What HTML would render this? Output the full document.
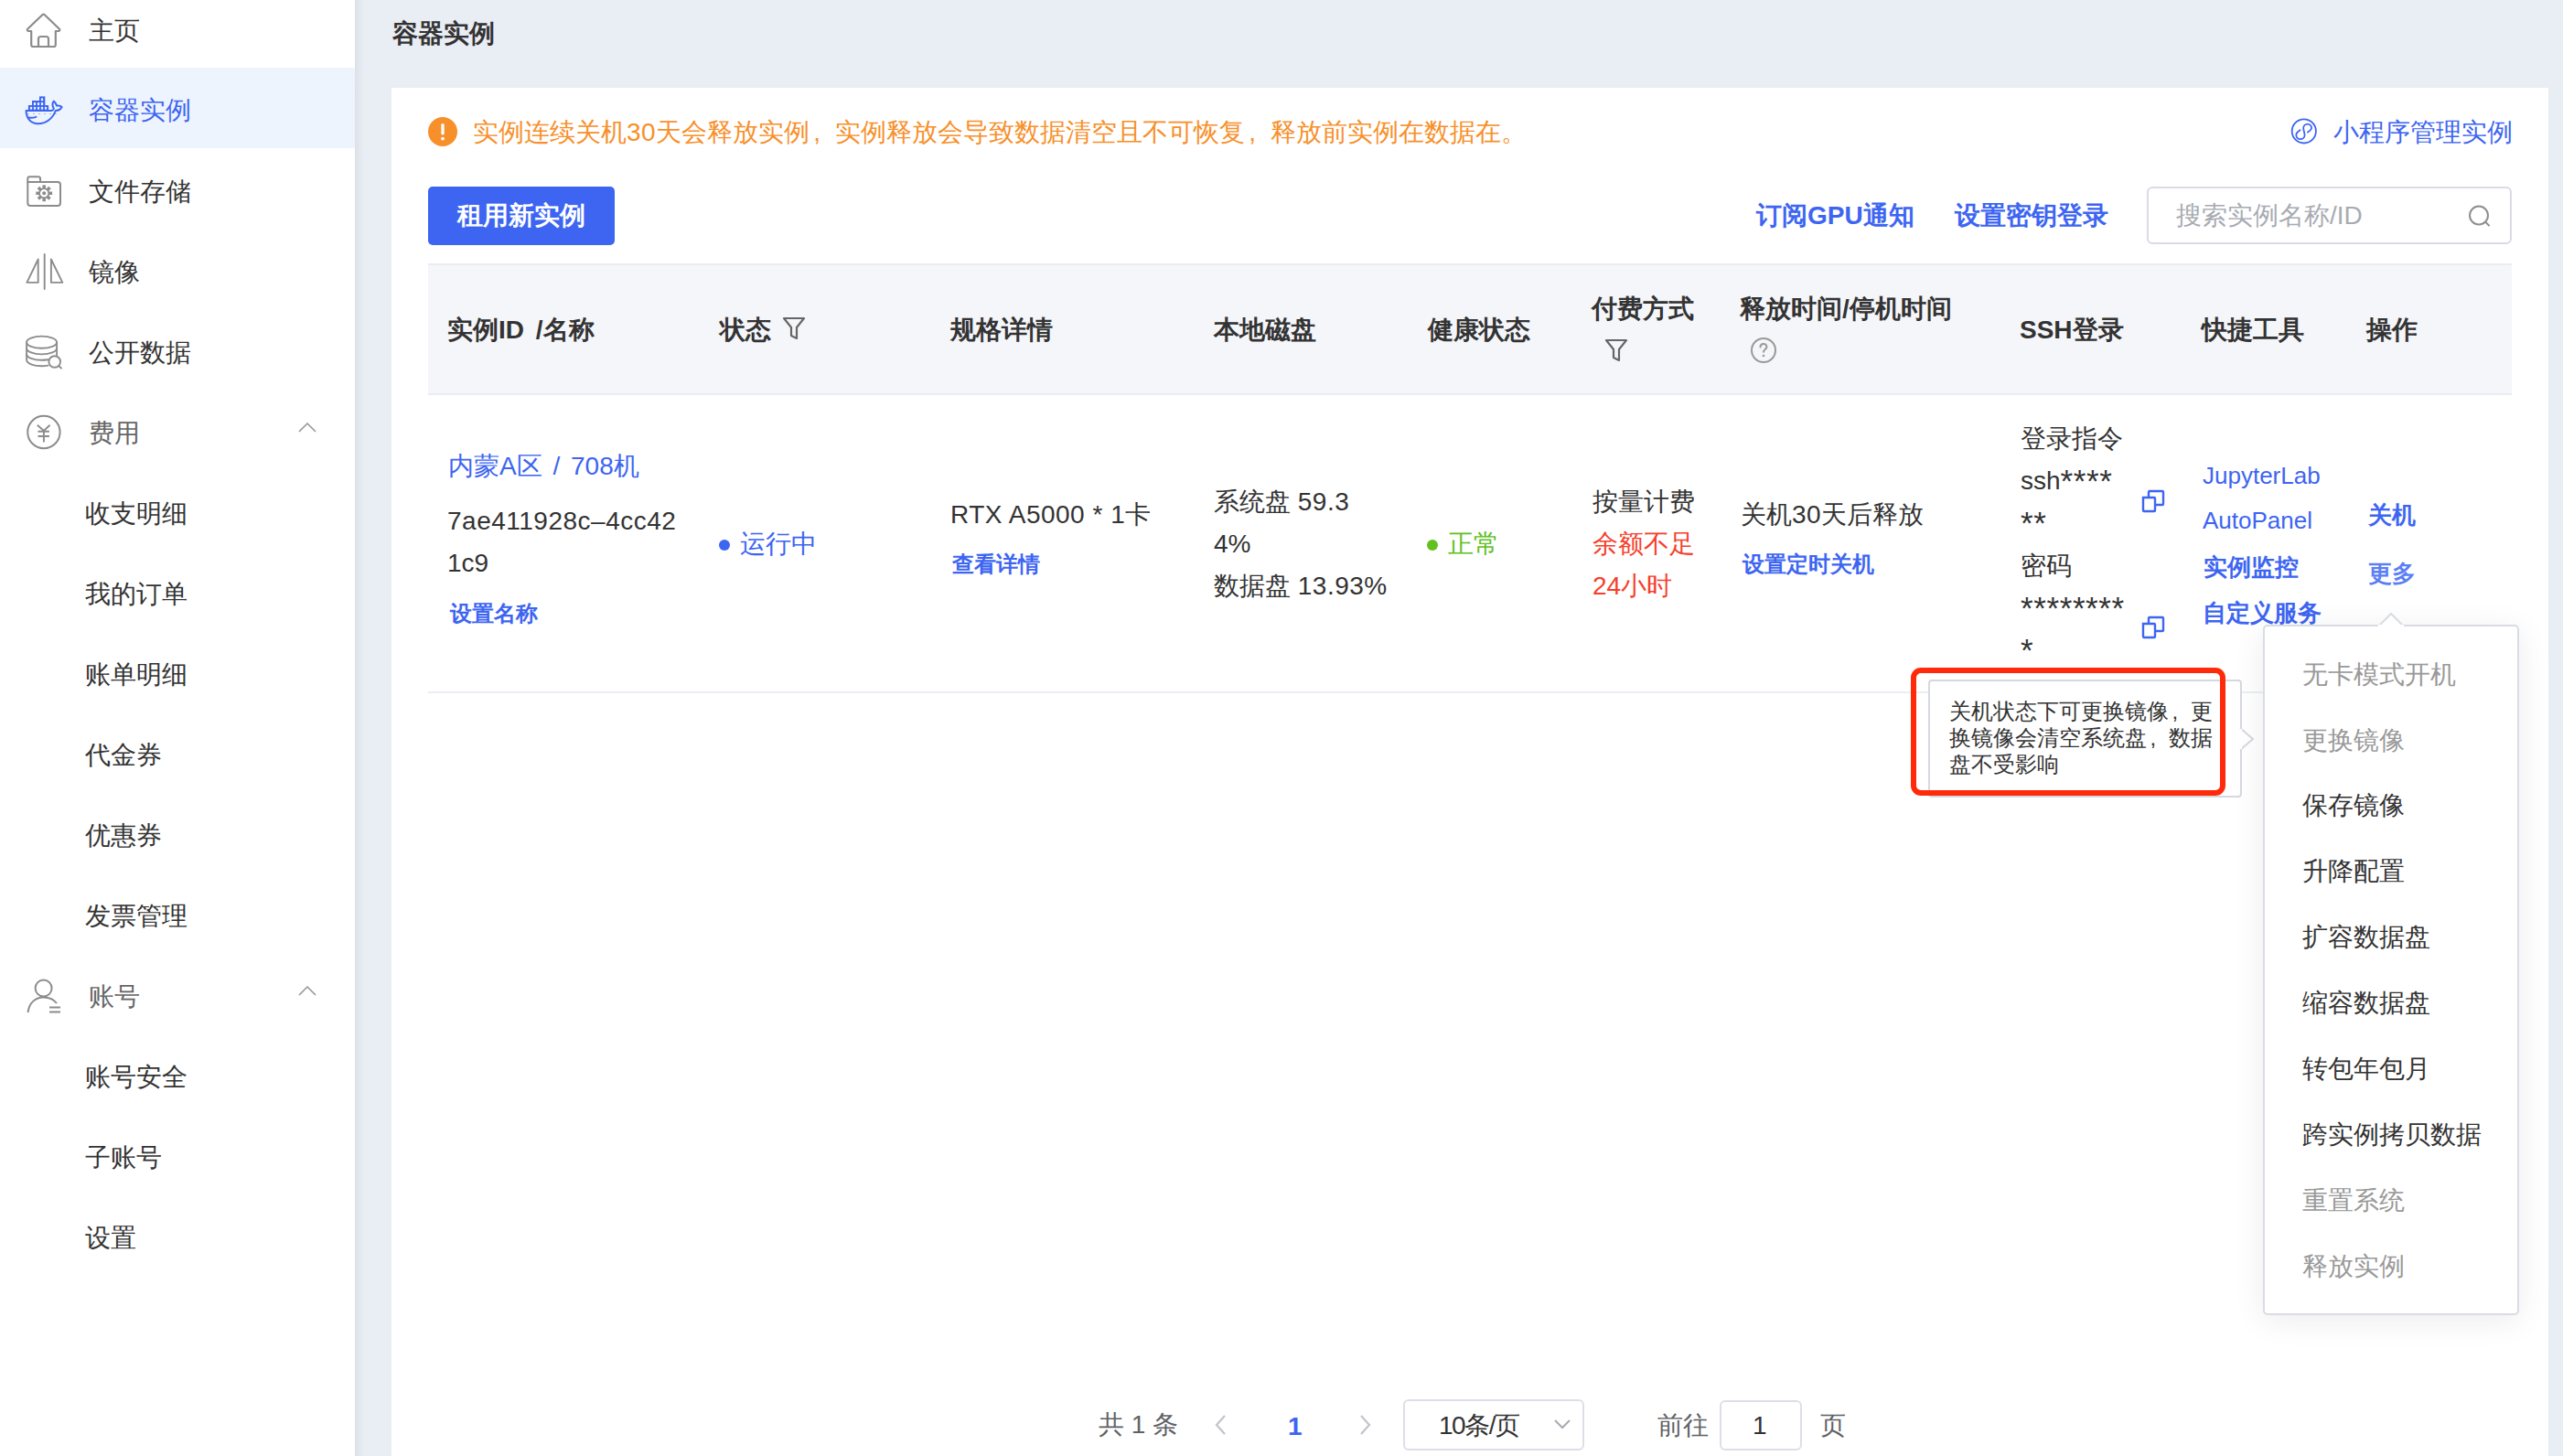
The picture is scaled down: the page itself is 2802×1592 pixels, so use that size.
<!DOCTYPE html>
<html><head><meta charset="utf-8">
<style>
html,body{margin:0;padding:0;}
body{width:2802px;height:1592px;position:relative;overflow:hidden;background:#e9edf4;font-family:"Liberation Sans",sans-serif;color:#333;}
.t{position:absolute;white-space:nowrap;line-height:40px;font-size:28px;}
.b{font-weight:bold;}
.blue{color:#3d65f2;}
.g6{color:#666;}
.g9{color:#999;}
.abs{position:absolute;}
.ast{letter-spacing:0.6px;font-size:35px;line-height:0;position:relative;top:3px;}
.ls{letter-spacing:0.5px;}
.cm{display:inline-block;width:1em;text-indent:0.15em;}
.ws{word-spacing:5px;}
#side{position:absolute;left:0;top:0;width:388px;height:1592px;background:#fff;}
#sel{position:absolute;left:0;top:74px;width:388px;height:88px;background:#edf4fe;}
#shadow{position:absolute;left:388px;top:0;width:10px;height:1592px;background:linear-gradient(to right,#dde1e8,#e9edf4);}
#card{position:absolute;left:428px;top:96px;width:2358px;height:1496px;background:#fff;}
#thead{position:absolute;left:468px;top:288px;width:2278px;height:144px;background:#f5f6fa;border-top:2px solid #e9ecf2;border-bottom:2px solid #e9ecf2;box-sizing:border-box;}
#rowline{position:absolute;left:468px;top:756px;width:2278px;height:2px;background:#ebeef5;}
</style></head>
<body>
<div id="side">
  <div id="sel"></div>
</div>
<div id="shadow"></div>

<!-- sidebar icons -->
<svg class="abs" style="left:0;top:0" width="388" height="1592" viewBox="0 0 388 1592">
  <g fill="none" stroke="#8c8c8c" stroke-width="2.2" stroke-linejoin="round" stroke-linecap="round">
    <!-- home -->
    <path d="M34.2 34 H31 a1.3 1.3 0 0 1 -0.9 -2.2 L46.3 16.3 a1.8 1.8 0 0 1 2.5 0 L65 31.8 a1.3 1.3 0 0 1 -0.9 2.2 H60.8 V49 a2 2 0 0 1 -2 2 H36.2 a2 2 0 0 1 -2 -2 Z"/>
    <path d="M42 50.5 V42.5 a2.5 2.5 0 0 1 2.5 -2.5 H50.5 a2.5 2.5 0 0 1 2.5 2.5 V50.5"/>
    <!-- folder -->
    <path d="M30.3 199 V195.3 a2 2 0 0 1 2 -2 H42 a2 2 0 0 1 2 2 V199" stroke-width="2"/>
    <path d="M30.3 199 H63 a3 3 0 0 1 3 3 V222 a3 3 0 0 1 -3 3 H33.3 a3 3 0 0 1 -3 -3 Z" stroke-width="2"/>
    <circle cx="48.2" cy="211.3" r="5.1" stroke-width="1.6"/>
    <!-- mirror -->
    <path d="M48.7 278 V316" stroke-width="1.9"/>
    <path d="M41.7 283.5 L29.4 308.9 H41.7 Z" stroke-width="1.9"/>
    <path d="M55.9 283.5 L68.3 308.9 H55.9 Z" stroke-width="1.9"/>
    <!-- database -->
    <g stroke-width="1.9">
    <ellipse cx="45.6" cy="374.2" rx="16.5" ry="6.6"/>
    <path d="M29.1 374.2 V393.6 c0 3.7 7.4 6.6 16.5 6.6 c2.5 0 4.9 -0.2 7 -0.6"/>
    <path d="M62.1 374.2 V388.3"/>
    <path d="M29.1 380.8 c0 3.7 7.4 6.6 16.5 6.6 s16.5 -3 16.5 -6.6"/>
    <path d="M29.1 387.2 c0 3.7 7.4 6.6 16.5 6.6 c2.4 0 4.6 -0.15 6.6 -0.5"/>
    <circle cx="59.7" cy="395.5" r="6.3"/>
    <path d="M64.3 400 L67 402.7"/>
    </g>
    <!-- yen -->
    <circle cx="47.9" cy="472.55" r="17.7" stroke-width="2"/>
    <path d="M40.8 464.7 L47.9 471 L54.6 464.7 M47.9 471 V483.5 M41.5 471.7 H53.9 M41.5 477 H53.9" stroke-width="1.9" stroke-linecap="butt" stroke-linejoin="miter"/>
    <!-- chevrons -->
    <path d="M327 472 L336 463 L345 472" stroke-width="1.7" stroke-linecap="butt" stroke="#9a9a9a"/>
    <path d="M327 1088 L336 1079 L345 1088" stroke-width="1.7" stroke-linecap="butt" stroke="#9a9a9a"/>
    <!-- user -->
    <circle cx="47.6" cy="1080.5" r="9" stroke-width="2"/>
    <path d="M30.5 1107 C32 1096 39 1090.5 47.6 1090.5 C54 1090.5 59 1093 62 1097" stroke-width="2" stroke-linecap="butt"/>
    <path d="M54 1101.5 H66 M54 1106.5 H66" stroke-width="1.9" stroke-linecap="butt"/>
  </g>
  <g transform="translate(48.2,211.3)" fill="#8c8c8c"><rect x="-1.75" y="-8.9" width="3.5" height="4.2" transform="rotate(0)"/><rect x="-1.75" y="-8.9" width="3.5" height="4.2" transform="rotate(45)"/><rect x="-1.75" y="-8.9" width="3.5" height="4.2" transform="rotate(90)"/><rect x="-1.75" y="-8.9" width="3.5" height="4.2" transform="rotate(135)"/><rect x="-1.75" y="-8.9" width="3.5" height="4.2" transform="rotate(180)"/><rect x="-1.75" y="-8.9" width="3.5" height="4.2" transform="rotate(225)"/><rect x="-1.75" y="-8.9" width="3.5" height="4.2" transform="rotate(270)"/><rect x="-1.75" y="-8.9" width="3.5" height="4.2" transform="rotate(315)"/><circle r="2"/></g>
  <!-- docker -->
  <g fill="#3d65f2">
    <rect x="30.9" y="115" width="22.2" height="5.6"/>
    <rect x="35" y="110" width="14.3" height="5.4"/>
    <rect x="43" y="105.4" width="6.3" height="5"/>
  </g>
  <g fill="#ecf3fe">
    <rect x="32.9" y="116.9" width="2.2" height="2.7"/><rect x="36.9" y="116.9" width="2.2" height="2.7"/><rect x="40.9" y="116.9" width="2.2" height="2.7"/><rect x="44.9" y="116.9" width="2.2" height="2.7"/><rect x="48.9" y="116.9" width="2.2" height="2.7"/>
    <rect x="36.9" y="112.1" width="2.2" height="2.9"/><rect x="40.9" y="112.1" width="2.2" height="2.9"/><rect x="44.9" y="112.1" width="2.2" height="2.9"/>
    <rect x="44.9" y="107.4" width="2.2" height="2.8"/>
  </g>
  <g fill="none" stroke="#3d65f2" stroke-width="2" stroke-linecap="round" stroke-linejoin="round">
    <path d="M28.6 121 H55.5 C57.5 121 59 120 58.8 118.5 C57.3 116 57.2 112.5 58.8 110.6 C60.3 111.6 61.2 113.5 62 115.6 C64 115.4 66.5 115.8 67.6 117 C66.5 119.5 63.5 120.8 60.8 121 C57.5 130 50 135.3 41.6 135.3 C33.5 135.3 28.6 129 28.6 121 Z"/>
    <path d="M31 128.6 C34 129 37.5 128.7 39.4 127.8"/>
  </g>
  <path d="M30 124.6 H66" stroke="#3d65f2" stroke-width="0.8" stroke-dasharray="2 4" opacity="0.6"/>
</svg>

<!-- sidebar text -->
<div class="t" style="left:97px;top:14px">主页</div>
<div class="t blue" style="left:97px;top:101px">容器实例</div>
<div class="t" style="left:97px;top:190px">文件存储</div>
<div class="t" style="left:97px;top:278px">镜像</div>
<div class="t" style="left:97px;top:366px">公开数据</div>
<div class="t g6" style="left:97px;top:454px">费用</div>
<div class="t" style="left:93px;top:542px">收支明细</div>
<div class="t" style="left:93px;top:630px">我的订单</div>
<div class="t" style="left:93px;top:718px">账单明细</div>
<div class="t" style="left:93px;top:806px">代金券</div>
<div class="t" style="left:93px;top:894px">优惠券</div>
<div class="t" style="left:93px;top:982px">发票管理</div>
<div class="t g6" style="left:97px;top:1070px">账号</div>
<div class="t" style="left:93px;top:1158px">账号安全</div>
<div class="t" style="left:93px;top:1246px">子账号</div>
<div class="t" style="left:93px;top:1334px">设置</div>

<!-- main -->
<div class="t b" style="left:429px;top:17px">容器实例</div>
<div id="card"></div>

<!-- alert -->
<svg class="abs" style="left:468px;top:128px" width="32" height="32" viewBox="0 0 32 32">
  <circle cx="16" cy="16" r="16" fill="#f7902a"/>
  <rect x="14.3" y="7" width="3.4" height="12.5" rx="1.7" fill="#fff"/>
  <circle cx="16" cy="23.6" r="1.9" fill="#fff"/>
</svg>
<div class="t" style="left:517px;top:125px;color:#f7902a">实例连续关机<span class="ls">30</span>天会释放实例<span class="cm">,</span>实例释放会导致数据清空且不可恢复<span class="cm">,</span>释放前实例在数据在。</div>

<svg class="abs" style="left:2502px;top:127px" width="34" height="34" viewBox="0 0 34 34">
  <circle cx="16.8" cy="16.4" r="13.1" fill="none" stroke="#3d65f2" stroke-width="1.8"/>
  <path d="M12.6 15.3 C10.5 16.7 8.3 18 8.3 20.5 A4.65 4.65 0 0 0 17.6 20.5 C17.6 18.5 16.2 15.5 16.2 13 A4.45 4.45 0 0 1 25.1 13 C25.1 14.8 22.5 16.5 21 17.6" fill="none" stroke="#3d65f2" stroke-width="1.8" stroke-linecap="round"/>
</svg>
<div class="t blue" style="left:2551px;top:125px">小程序管理实例</div>

<!-- toolbar -->
<div class="abs" style="left:468px;top:204px;width:204px;height:64px;background:#3d65f2;border-radius:5px;"></div>
<div class="t b" style="left:500px;top:216px;color:#fff">租用新实例</div>
<div class="t b blue" style="left:1920px;top:216px">订阅GPU通知</div>
<div class="t b blue" style="left:2137px;top:216px">设置密钥登录</div>
<div class="abs" style="left:2347px;top:204px;width:399px;height:63px;border:2px solid #d9dce3;border-radius:6px;box-sizing:border-box;background:#fff"></div>
<div class="t" style="left:2379px;top:216px;color:#a8abb2">搜索实例名称/ID</div>
<svg class="abs" style="left:2690px;top:215px" width="40" height="40" viewBox="0 0 40 40">
  <circle cx="20" cy="20.5" r="10" fill="none" stroke="#8f8f8f" stroke-width="2"/>
  <path d="M27.5 28 L31 31.5" stroke="#8f8f8f" stroke-width="2" stroke-linecap="round"/>
</svg>

<!-- table header -->
<div id="thead"></div>
<div class="t b" style="left:489px;top:341px"><span class="ws">实例ID /名称</span></div>
<div class="t b" style="left:787px;top:341px">状态</div>
<svg class="abs" style="left:850px;top:343px" width="36" height="32" viewBox="0 0 36 32">
  <path d="M7 5 H29 L21 15 V27 L15 24 V15 Z" fill="none" stroke="#666" stroke-width="2.2" stroke-linejoin="round"/>
</svg>
<div class="t b" style="left:1039px;top:341px">规格详情</div>
<div class="t b" style="left:1327px;top:341px">本地磁盘</div>
<div class="t b" style="left:1561px;top:341px">健康状态</div>
<div class="t b" style="left:1740px;top:318px">付费方式</div>
<svg class="abs" style="left:1749px;top:367px" width="36" height="32" viewBox="0 0 36 32">
  <path d="M7 5 H29 L21 15 V27 L15 24 V15 Z" fill="none" stroke="#666" stroke-width="2.2" stroke-linejoin="round"/>
</svg>
<div class="t b" style="left:1902px;top:318px">释放时间/停机时间</div>
<svg class="abs" style="left:1912px;top:367px" width="32" height="32" viewBox="0 0 32 32">
  <circle cx="16" cy="16" r="13" fill="none" stroke="#999" stroke-width="2"/>
  <path d="M12.5 12.5 c0 -2 1.5 -3.5 3.5 -3.5 s3.5 1.5 3.5 3.3 c0 2.5 -3.5 2.8 -3.5 5.5" fill="none" stroke="#999" stroke-width="2" stroke-linecap="round"/>
  <circle cx="16" cy="22" r="1.3" fill="#999"/>
</svg>
<div class="t b" style="left:2208px;top:341px">SSH登录</div>
<div class="t b" style="left:2407px;top:341px">快捷工具</div>
<div class="t b" style="left:2587px;top:341px">操作</div>

<!-- row -->
<div id="rowline"></div>
<div class="t blue" style="left:490px;top:490px"><span style="word-spacing:4px">内蒙A区 / 708机</span></div>
<div class="t" style="left:489px;top:550px"><span class="ls">7ae411928c–4cc42</span></div>
<div class="t" style="left:489px;top:596px">1c9</div>
<div class="t b blue" style="left:492px;top:651px;font-size:24px">设置名称</div>

<div class="abs" style="left:786px;top:590px;width:12px;height:12px;border-radius:6px;background:#3d65f2"></div>
<div class="t blue" style="left:809px;top:575px">运行中</div>

<div class="t" style="left:1039px;top:543px"><span class="ls">RTX A5000 * 1</span>卡</div>
<div class="t b blue" style="left:1041px;top:597px;font-size:24px">查看详情</div>

<div class="t" style="left:1327px;top:529px">系统盘 <span class="ls">59.3</span></div>
<div class="t" style="left:1327px;top:575px">4%</div>
<div class="t" style="left:1327px;top:621px">数据盘 <span class="ls">13.93%</span></div>

<div class="abs" style="left:1560px;top:590px;width:12px;height:12px;border-radius:6px;background:#62c11f"></div>
<div class="t" style="left:1583px;top:575px;color:#62c11f">正常</div>

<div class="t" style="left:1741px;top:529px">按量计费</div>
<div class="t" style="left:1741px;top:575px;color:#f5402c">余额不足</div>
<div class="t" style="left:1741px;top:621px;color:#f5402c">24小时</div>

<div class="t" style="left:1903px;top:543px">关机<span class="ls">30</span>天后释放</div>
<div class="t b blue" style="left:1905px;top:597px;font-size:24px">设置定时关机</div>

<div class="t" style="left:2209px;top:460px">登录指令</div>
<div class="t" style="left:2209px;top:506px">ssh<span class="ast">****</span></div>
<div class="t" style="left:2209px;top:552px"><span class="ast">**</span></div>
<div class="t" style="left:2209px;top:599px">密码</div>
<div class="t" style="left:2209px;top:645px"><span class="ast">********</span></div>
<div class="t" style="left:2209px;top:691px"><span class="ast">*</span></div>
<svg class="abs" style="left:2340px;top:534px" width="28" height="28" viewBox="0 0 28 28">
  <path d="M3 10 H15 a1 1 0 0 1 1 1 V24 a1 1 0 0 1 -1 1 H4 a1 1 0 0 1 -1 -1 Z M9 10 V4 a1 1 0 0 1 1 -1 H24 a1 1 0 0 1 1 1 V17 a1 1 0 0 1 -1 1 H16" fill="none" stroke="#3d65f2" stroke-width="2.4"/>
</svg>
<svg class="abs" style="left:2340px;top:672px" width="28" height="28" viewBox="0 0 28 28">
  <path d="M3 10 H15 a1 1 0 0 1 1 1 V24 a1 1 0 0 1 -1 1 H4 a1 1 0 0 1 -1 -1 Z M9 10 V4 a1 1 0 0 1 1 -1 H24 a1 1 0 0 1 1 1 V17 a1 1 0 0 1 -1 1 H16" fill="none" stroke="#3d65f2" stroke-width="2.4"/>
</svg>

<div class="t blue" style="left:2408px;top:500px;font-size:26px">JupyterLab</div>
<div class="t blue" style="left:2408px;top:549px;font-size:26px">AutoPanel</div>
<div class="t b blue" style="left:2409px;top:600px;font-size:26px">实例监控</div>
<div class="t b blue" style="left:2408px;top:650px;font-size:26px">自定义服务</div>

<div class="t b blue" style="left:2589px;top:543px;font-size:26px">关机</div>
<div class="t b" style="left:2589px;top:607px;font-size:26px;color:#5a7ff5">更多</div>

<!-- tooltip -->
<div class="abs" style="left:2108px;top:743px;width:343px;height:129px;background:#fff;border:2px solid #d5d8de;border-radius:4px;box-sizing:border-box;"></div>
<svg class="abs" style="left:2448px;top:794px" width="20" height="30" viewBox="0 0 20 30">
  <path d="M1 2 L15 14 L1 26" fill="#fff" stroke="#d5d8de" stroke-width="2"/>
  <rect x="0" y="3" width="3" height="22" fill="#fff"/>
</svg>
<div class="abs" style="left:2131px;top:763px;width:300px;font-size:24px;line-height:29px;color:#333;">关机状态下可更换镜像<span class="cm">,</span>更换镜像会清空系统盘<span class="cm">,</span>数据盘不受影响</div>
<div class="abs" style="left:2089px;top:730px;width:344px;height:140px;border:6px solid #ff2a0a;border-radius:11px;box-sizing:border-box;"></div>

<!-- dropdown -->
<div class="abs" style="left:2474px;top:683px;width:280px;height:755px;background:#fff;border:2px solid #d9dce3;border-radius:5px;box-sizing:border-box;box-shadow:0 6px 34px rgba(0,0,0,0.08);"></div>
<svg class="abs" style="left:2597px;top:668px" width="34" height="18" viewBox="0 0 34 18">
  <path d="M4 16 L17 3 L30 16" fill="#fff" stroke="#d9dce3" stroke-width="2"/>
  <rect x="3" y="15" width="28" height="4" fill="#fff"/>
</svg>
<div class="t g9" style="left:2517px;top:718px">无卡模式开机</div>
<div class="t g9" style="left:2517px;top:790px">更换镜像</div>
<div class="t" style="left:2517px;top:861px">保存镜像</div>
<div class="t" style="left:2517px;top:933px">升降配置</div>
<div class="t" style="left:2517px;top:1005px">扩容数据盘</div>
<div class="t" style="left:2517px;top:1077px">缩容数据盘</div>
<div class="t" style="left:2517px;top:1149px">转包年包月</div>
<div class="t" style="left:2517px;top:1221px">跨实例拷贝数据</div>
<div class="t g9" style="left:2517px;top:1293px">重置系统</div>
<div class="t g9" style="left:2517px;top:1365px">释放实例</div>

<!-- pagination -->
<div class="t" style="left:1201px;top:1538px;color:#606266">共 1 条</div>
<svg class="abs" style="left:1324px;top:1544px" width="20" height="28" viewBox="0 0 20 28">
  <path d="M15 4 L6 14 L15 24" fill="none" stroke="#c0c4cc" stroke-width="2.2"/>
</svg>
<div class="t b blue" style="left:1408px;top:1540px">1</div>
<svg class="abs" style="left:1483px;top:1544px" width="20" height="28" viewBox="0 0 20 28">
  <path d="M5 4 L14 14 L5 24" fill="none" stroke="#c0c4cc" stroke-width="2.2"/>
</svg>
<div class="abs" style="left:1534px;top:1530px;width:198px;height:56px;border:2px solid #dcdfe6;border-radius:6px;box-sizing:border-box;"></div>
<div class="t" style="left:1573px;top:1539px;letter-spacing:-1.5px">10条/页</div>
<svg class="abs" style="left:1696px;top:1547px" width="24" height="20" viewBox="0 0 24 20">
  <path d="M4 6 L12 14 L20 6" fill="none" stroke="#a8abb2" stroke-width="2"/>
</svg>
<div class="t" style="left:1812px;top:1539px;color:#606266">前往</div>
<div class="abs" style="left:1880px;top:1531px;width:90px;height:55px;border:2px solid #dcdfe6;border-radius:6px;box-sizing:border-box;"></div>
<div class="t" style="left:1916px;top:1539px">1</div>
<div class="t" style="left:1990px;top:1539px;color:#606266">页</div>

</body></html>
